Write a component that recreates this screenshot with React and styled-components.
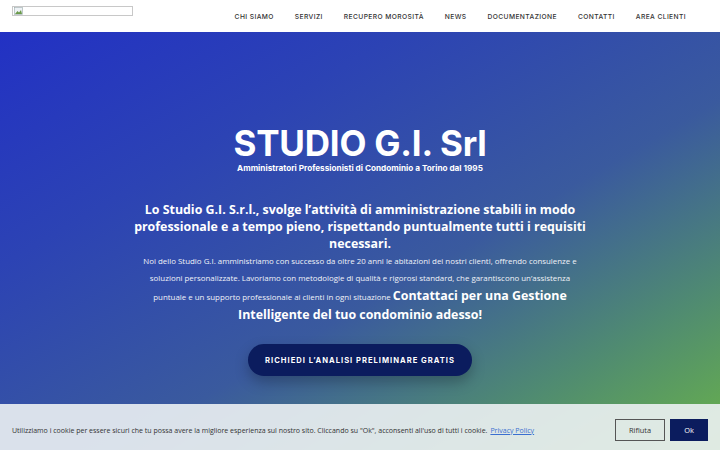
import styled, { createGlobalStyle } from "styled-components";

const GlobalStyle = createGlobalStyle`
  html, body {
    margin: 0;
    padding: 0;
    height: 100%;
  }
  body {
    font-family: "Open Sans", "Liberation Sans", sans-serif;
    overflow: hidden;
  }
  * {
    box-sizing: border-box;
  }
`;

const navItems = [
  "CHI SIAMO",
  "SERVIZI",
  "RECUPERO MOROSITÀ",
  "NEWS",
  "DOCUMENTAZIONE",
  "CONTATTI",
  "AREA CLIENTI",
];

const Page = styled.div`
  width: 720px;
  height: 450px;
  display: flex;
  flex-direction: column;
  position: relative;
`;

const Header = styled.header`
  height: 32px;
  background: #fff;
  display: flex;
  align-items: center;
  justify-content: space-between;
  padding: 0 34px 0 12px;
`;

const LogoBox = styled.div`
  width: 121px;
  height: 10px;
  margin-top: -11px;
  border: 1px solid #c8c8c8;
  display: flex;
  align-items: center;
  padding-left: 1px;
`;

const Nav = styled.nav`
  display: flex;
  gap: 21px;
  padding-top: 1px;
`;

const NavLink = styled.a`
  font-family: "Inter", "Liberation Sans", sans-serif;
  font-size: 6.7px;
  font-weight: 500;
  letter-spacing: 0.4px;
  color: #333;
  text-decoration: none;
`;

const Hero = styled.section`
  flex: 1;
  background: linear-gradient(150deg, #2231c4 0%, #2c43b4 28%, #3a5a9e 58%, #4f8a72 80%, #69b24a 100%);
  display: flex;
  flex-direction: column;
  align-items: center;
  padding-top: 92px;
  color: #fff;
  text-align: center;
`;

const Title = styled.h1`
  margin: 0;
  font-family: "Inter", "Liberation Sans", sans-serif;
  font-weight: 700;
  font-size: 35px;
  line-height: 38px;
  letter-spacing: -0.2px;
`;

const Subtitle = styled.div`
  font-family: "Inter", "Liberation Sans", sans-serif;
  font-weight: 700;
  font-size: 8.2px;
  line-height: 12px;
`;

const Lead = styled.p`
  margin: 27px 0 0;
  width: 456px;
  font-weight: 700;
  font-size: 12.4px;
  line-height: 17px;
`;

const Body = styled.p`
  margin: 1px 0 0;
  width: 450px;
  font-size: 7.9px;
  line-height: 17px;
  color: #f0f2f8;
`;

const Strong = styled.strong`
  font-size: 12.4px;
  line-height: 17px;
  font-weight: 700;
  color: #fff;
`;

const CtaButton = styled.button`
  margin-top: 19px;
  width: 224px;
  height: 32px;
  border: none;
  border-radius: 16px;
  background: #0b1c5e;
  color: #fff;
  font-family: "Inter", "Liberation Sans", sans-serif;
  font-weight: 700;
  font-size: 7.6px;
  letter-spacing: 1px;
  box-shadow: 0 6px 14px rgba(0, 0, 0, 0.25);
`;

const CookieBar = styled.div`
  position: absolute;
  left: 0;
  right: 0;
  bottom: 0;
  height: 46px;
  background: rgba(236, 241, 243, 0.9);
  display: flex;
  align-items: center;
  padding: 6px 12px 0;
  font-size: 7px;
  color: #333;
`;

const CookieText = styled.div`
  flex: 1;
`;

const PolicyLink = styled.a`
  color: #3a6fd0;
  text-decoration: underline;
  margin-left: 3px;
`;

const CookieButton = styled.button`
  height: 22px;
  padding: 0;
  margin-left: 5px;
  font-family: "Open Sans", "Liberation Sans", sans-serif;
  font-size: 7.4px;
  border: 1.5px solid ${(p) => (p.dark ? "#0b1c5e" : "#555")};
  background: ${(p) => (p.dark ? "#0b1c5e" : "transparent")};
  color: ${(p) => (p.dark ? "#fff" : "#333")};
  width: ${(p) => (p.dark ? "38px" : "50px")};
`;

const BrokenImage = () => (
  <svg width="9" height="8" viewBox="0 0 9 8">
    <rect x="0.5" y="0.5" width="8" height="7" fill="#eef2f6" stroke="#9aa" strokeWidth="0.6" />
    <path d="M1 7 L3.5 4 L5 5.5 L7 3 L8 7 Z" fill="#6a9a4a" />
  </svg>
);

export default function App() {
  return (
    <Page>
      <GlobalStyle />
      <Header>
        <LogoBox>
          <BrokenImage />
        </LogoBox>
        <Nav>
          {navItems.map((item) => (
            <NavLink key={item} href="#">
              {item}
            </NavLink>
          ))}
        </Nav>
      </Header>
      <Hero>
        <Title>STUDIO G.I. Srl</Title>
        <Subtitle>Amministratori Professionisti di Condominio a Torino dal 1995</Subtitle>
        <Lead>
          Lo Studio G.I. S.r.l., svolge l’attività di amministrazione stabili in modo
          professionale e a tempo pieno, rispettando puntualmente tutti i requisiti
          necessari.
        </Lead>
        <Body>
          Noi dello Studio G.I. amministriamo con successo da oltre 20 anni le abitazioni dei
          nostri clienti, offrendo consulenze e soluzioni personalizzate. Lavoriamo con
          metodologie di qualità e rigorosi standard, che garantiscono un’assistenza puntuale e
          un supporto professionale ai clienti in ogni situazione{" "}
          <Strong>Contattaci per una Gestione Intelligente del tuo condominio adesso!</Strong>
        </Body>
        <CtaButton>RICHIEDI L’ANALISI PRELIMINARE GRATIS</CtaButton>
      </Hero>
      <CookieBar>
        <CookieText>
          Utilizziamo i cookie per essere sicuri che tu possa avere la migliore esperienza sul
          nostro sito. Cliccando su "Ok", acconsenti all'uso di tutti i cookie.
          <PolicyLink href="#">Privacy Policy</PolicyLink>
        </CookieText>
        <CookieButton>Rifiuta</CookieButton>
        <CookieButton dark>Ok</CookieButton>
      </CookieBar>
    </Page>
  );
}
